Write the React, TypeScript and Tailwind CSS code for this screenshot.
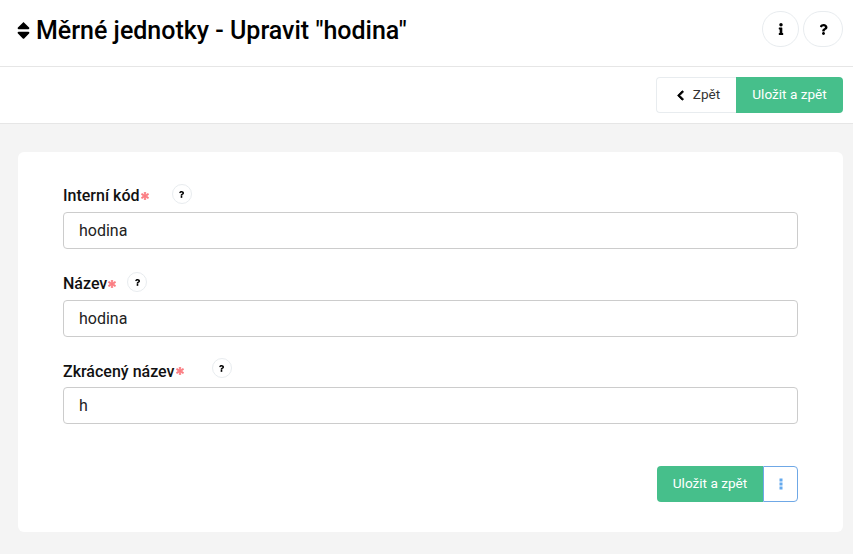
import { FaSort, FaInfo, FaQuestion, FaChevronLeft, FaAsterisk } from "react-icons/fa";

function Field({ label, value, gap, mt, row, labelMt }: { label: string; value: string; gap: string; mt: string; row: string; labelMt: string }) {
  return (
    <div className={mt}>
      <div className={`flex ${row} items-start`}>
        <span className={`${labelMt} text-[16px] leading-[20px] font-medium text-[#111]`}>{label}</span>
        <FaAsterisk className={`${row === "h-[29px]" ? "mt-[9px]" : "mt-[8px]"} ml-[1px] stroke-[#fb7c82] stroke-[50px] text-[8px] text-[#fb7c82]`} />
        <span className={`${gap} flex h-[20px] w-[20px] items-center justify-center rounded-full border border-[#e8ecef] bg-white`}>
          <FaQuestion className="text-[7px] text-black" />
        </span>
      </div>
      <input
        readOnly
        value={value}
        className="block h-[37px] w-full rounded-[4px] border border-[#ccc] bg-white px-[15px] text-[16px] text-[#222] outline-none"
      />
    </div>
  );
}

export default function App() {
  return (
    <div className="flex h-[554px] w-[853px] flex-col overflow-hidden bg-[#f4f4f4] font-['Roboto',sans-serif]">
      <header className="flex h-[67px] shrink-0 items-center justify-between border-b border-[#e6e6e6] bg-white pr-[10px] pb-[5px] pl-[17px]">
        <h1 className="flex items-center text-[25px] leading-[30px] font-medium text-black">
          <FaSort className="mr-[2px] -ml-[4px] text-[21px]" />
          Měrné jednotky - Upravit "hodina"
        </h1>
        <div className="mb-[3px] flex gap-[4px]">
          <button className="flex h-[36px] w-[37px] items-center justify-center rounded-full border border-[#e8ecef] bg-white">
            <FaInfo className="text-[12px] text-black" />
          </button>
          <button className="flex h-[36px] w-[40px] items-center justify-center rounded-full border border-[#e8ecef] bg-white">
            <FaQuestion className="text-[11px] text-black" />
          </button>
        </div>
      </header>
      <div className="flex h-[57px] shrink-0 items-center justify-end border-b border-[#e6e6e6] bg-white pr-[10px]">
        <button className="flex h-[36px] w-[80px] items-center justify-center rounded-l-[4px] border border-r-0 border-[#e8ecef] bg-white pb-[1px] text-[13.6px] text-[#333]">
          <FaChevronLeft className="mt-[1px] mr-[7px] ml-[2px] stroke-black stroke-[40px] text-[11px] text-black" />
          Zpět
        </button>
        <button className="h-[36px] w-[107px] rounded-r-[4px] bg-[#46bf8b] pb-[1px] text-[13.6px] text-white">Uložit a zpět</button>
      </div>
      <main className="mt-[28px] mr-[10px] ml-[18px] h-[380px] rounded-[6px] bg-white px-[45px] pt-[32px]">
        <Field label="Interní kód" value="hodina" gap="ml-[23px]" mt="" row="h-[28px]" labelMt="mt-[2px]" />
        <Field label="Název" value="hodina" gap="ml-[11px]" mt="mt-[23px]" row="h-[28px]" labelMt="mt-[2px]" />
        <Field label="Zkrácený název" value="h" gap="ml-[28px]" mt="mt-[21px]" row="h-[29px]" labelMt="mt-[4px]" />
        <div className="mt-[42px] flex justify-end">
          <button className="h-[36px] w-[106px] rounded-l-[4px] bg-[#46bf8b] pb-[1px] text-[13.6px] text-white">Uložit a zpět</button>
          <button className="flex h-[36px] w-[35px] items-center justify-center rounded-r-[4px] border border-[#6fa8e6] bg-white">
            <svg width="4" height="12" viewBox="0 0 4 12" fill="#64a9ee">
              <rect x="0.5" y="0.5" width="3" height="3" />
              <rect x="0.5" y="4.5" width="3" height="3" />
              <rect x="0.5" y="8.5" width="3" height="3" />
            </svg>
          </button>
        </div>
      </main>
    </div>
  );
}
